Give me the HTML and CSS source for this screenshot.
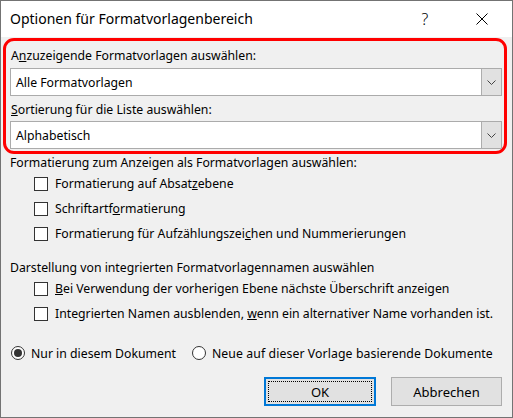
FILE: index.html
```html
<!DOCTYPE html>
<html lang="de">
<head>
<meta charset="utf-8">
<title>Optionen für Formatvorlagenbereich</title>
<link rel="stylesheet" href="styles.css">
</head>
<body>
<div class="dialog">
  <div class="titlebar">
    <div class="title">Optionen für Formatvorlagenbereich</div>
    <div class="tb-btn help">?</div>
    <div class="tb-btn close">
      <svg width="12" height="12" viewBox="0 0 12 12"><path d="M0.5 0.5L11.5 11.5M11.5 0.5L0.5 11.5" stroke="#000" stroke-width="1" fill="none"/></svg>
    </div>
  </div>
  <div class="content">
    <div class="highlight">
      <div class="label">A<u>n</u>zuzeigende Formatvorlagen auswählen:</div>
      <div class="combo">
        <div class="combo-value">Alle Formatvorlagen</div>
        <div class="combo-btn"><svg width="9" height="5" viewBox="0 0 9 5"><path d="M0.5 0.5L4.5 4.5L8.5 0.5" stroke="#444" stroke-width="1" fill="none"/></svg></div>
      </div>
      <div class="label second"><u>S</u>ortierung für die Liste auswählen:</div>
      <div class="combo">
        <div class="combo-value">Alphabetisch</div>
        <div class="combo-btn"><svg width="9" height="5" viewBox="0 0 9 5"><path d="M0.5 0.5L4.5 4.5L8.5 0.5" stroke="#444" stroke-width="1" fill="none"/></svg></div>
      </div>
    </div>

    <div class="section-label first">Formatierung zum Anzeigen als Formatvorlagen auswählen:</div>
    <div class="check-row"><span class="checkbox"></span><span>Formatierung auf Absat<u>z</u>ebene</span></div>
    <div class="check-row"><span class="checkbox"></span><span>Schriftartf<u>o</u>rmatierung</span></div>
    <div class="check-row"><span class="checkbox"></span><span>Formatierung für Aufzählungszei<u>c</u>hen und Nummerierungen</span></div>

    <div class="section-label second">Darstellung von integrierten Formatvorlagennamen auswählen</div>
    <div class="check-row"><span class="checkbox"></span><span><u>B</u>ei Verwendung der vorherigen Ebene nächste Überschrift anzeigen</span></div>
    <div class="check-row"><span class="checkbox"></span><span>Integrierten Namen ausblenden, <u>w</u>enn ein alternativer Name vorhanden ist.</span></div>

    <div class="radio-row">
      <span class="radio checked"></span><span class="radio-text">Nur in diesem Dokument</span>
      <span class="radio"></span><span class="radio-text wide">Neue auf dieser Vorlage basierende Dokumente</span>
    </div>

    <div class="button-row">
      <div class="button default"><span class="focus">OK</span></div>
      <div class="button">Abbrechen</div>
    </div>
  </div>
</div>
</body>
</html>
```

FILE: styles.css
```css
html, body {
  margin: 0;
  padding: 0;
  background: #f0f0f0;
}

body {
  font-family: "Noto Sans", "Open Sans", sans-serif;
  font-size: 12.25px;
  color: #000;
}

.dialog {
  width: 513px;
  height: 418px;
  box-sizing: border-box;
  border: 1px solid #737373;
  background: #f0f0f0;
  display: flex;
  flex-direction: column;
}

.titlebar {
  height: 36px;
  flex: none;
  background: #fff;
  display: flex;
  align-items: center;
}

.title {
  flex: 1;
  padding-left: 9px;
  font-size: 14px;
  line-height: 20px;
}

.tb-btn {
  width: 46px;
  height: 36px;
  display: flex;
  align-items: center;
  justify-content: center;
}

.help {
  font-size: 16px;
  font-weight: 300;
}

.close {
  margin-left: 11px;
  margin-right: 7px;
}

.content {
  flex: 1;
  display: flex;
  flex-direction: column;
}

.highlight {
  margin: 1px 5px 0 2px;
  border: 3px solid #ff0000;
  border-radius: 11px;
  padding: 7px 2px 2px 4px;
}

.label {
  line-height: 16px;
  padding-left: 1px;
  margin-bottom: 4px;
}

.label.second {
  margin-top: 6px;
  margin-bottom: 3px;
}

.combo {
  height: 28px;
  box-sizing: border-box;
  border: 1px solid #ababab;
  background: #fff;
  display: flex;
}

.combo-value {
  flex: 1;
  padding-left: 5px;
  display: flex;
  align-items: center;
}

.combo-btn {
  width: 20px;
  box-sizing: border-box;
  background: #e1e1e1;
  border-left: 1px solid #adadad;
  display: flex;
  align-items: center;
  justify-content: center;
}

.section-label {
  line-height: 16px;
  padding-left: 9px;
}

.section-label.first {
  margin-top: 1px;
}

.section-label.second {
  margin-top: 14px;
}

.check-row {
  height: 25px;
  display: flex;
  align-items: center;
  padding-left: 33px;
}

.checkbox {
  width: 14px;
  height: 14px;
  box-sizing: border-box;
  border: 1px solid #333;
  background: #fff;
  margin-right: 7px;
  flex: none;
}

.radio-row {
  margin-top: 17px;
  height: 20px;
  display: flex;
  align-items: center;
  padding-left: 10px;
}

.radio {
  width: 14px;
  height: 14px;
  box-sizing: border-box;
  border: 1px solid #333;
  border-radius: 50%;
  background: #fff;
  flex: none;
  display: flex;
  align-items: center;
  justify-content: center;
}

.radio.checked::after {
  content: "";
  width: 8px;
  height: 8px;
  border-radius: 50%;
  background: #333;
}

.radio-text {
  margin-left: 6px;
  margin-right: 16px;
}

.radio-text.wide {
  letter-spacing: 0.1px;
}

.button-row {
  margin-top: 14px;
  display: flex;
  justify-content: flex-end;
  gap: 15px;
  padding-right: 10px;
}

.button {
  width: 111px;
  height: 29px;
  box-sizing: border-box;
  border: 1px solid #adadad;
  background: #e1e1e1;
  display: flex;
  align-items: center;
  justify-content: center;
  font-size: 13px;
}

.button.default {
  width: 112px;
  border: 2px solid #0078d7;
  padding: 2px;
}

.focus {
  flex: 1;
  align-self: stretch;
  border: 1px dotted #000;
  display: flex;
  align-items: center;
  justify-content: center;
}
```
